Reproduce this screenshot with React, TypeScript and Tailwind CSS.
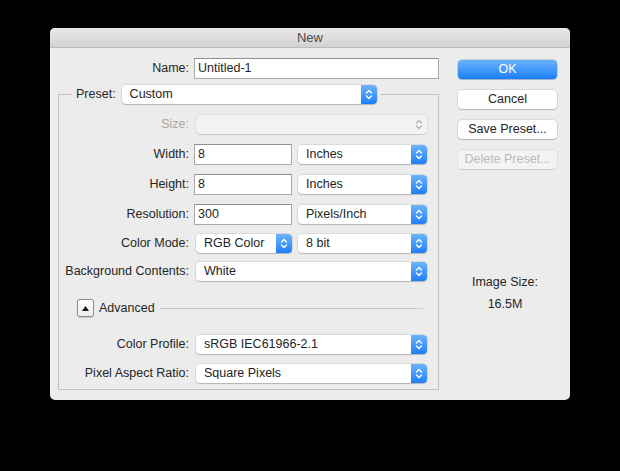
import React from "react";

const FONT = { fontFamily: '"Liberation Sans", Arial, Helvetica, sans-serif' };

function Chevrons({ color }: { color: string }) {
  return (
    <svg width="16" height="19" viewBox="0 0 16 19" fill="none">
      <path d="M5.5 8 L8 5.5 L10.5 8" stroke={color} strokeWidth="1.4" strokeLinecap="round" strokeLinejoin="round" />
      <path d="M5.5 11 L8 13.5 L10.5 11" stroke={color} strokeWidth="1.4" strokeLinecap="round" strokeLinejoin="round" />
    </svg>
  );
}

function Popup({ text, w, disabled }: { text: string; w: string; disabled?: boolean }) {
  return (
    <div
      className={`${w} h-[19px] rounded-[4px] flex items-center shrink-0 ${
        disabled
          ? "bg-[#f2f2f2] shadow-[0_0_0_0.5px_rgba(0,0,0,0.08),0_0.5px_1px_rgba(0,0,0,0.1)]"
          : "bg-white shadow-[0_0_0_0.5px_rgba(0,0,0,0.14),0_1px_1px_rgba(0,0,0,0.18)]"
      }`}
    >
      <span className="flex-1 pl-[8px] text-[12.5px] leading-none text-[#232323] truncate">{text}</span>
      {disabled ? (
        <div className="w-[16px] h-[19px] flex items-center justify-center">
          <Chevrons color="#b5b5b5" />
        </div>
      ) : (
        <div className="w-[16px] h-[19px] rounded-r-[4px] bg-gradient-to-b from-[#6cb3fa] to-[#1a7ff9] flex items-center justify-center">
          <Chevrons color="#ffffff" />
        </div>
      )}
    </div>
  );
}

function TextField({ value, w }: { value: string; w: string }) {
  return (
    <div className={`${w} h-[21px] bg-white border border-[#a9a9a9] border-t-[#8f8f8f] flex items-center pl-[3px] text-[12.5px] text-[#1f1f1f] shrink-0`}>
      {value}
    </div>
  );
}

function Label({ text, dim }: { text: string; dim?: boolean }) {
  return (
    <div className={`w-[130px] shrink-0 text-right text-[12.5px] whitespace-nowrap ${dim ? "text-[#a8a8a8]" : "text-[#262626]"}`}>
      {text}
    </div>
  );
}

function Button({ text, primary, disabled }: { text: string; primary?: boolean; disabled?: boolean }) {
  const cls = primary
    ? "bg-gradient-to-b from-[#6ab2fb] to-[#137ffa] text-white shadow-[0_0_0_0.5px_rgba(0,60,160,0.35),0_1px_1px_rgba(0,0,0,0.15)]"
    : disabled
    ? "bg-[#f3f3f3] text-[#b9b9b9] shadow-[0_0_0_0.5px_rgba(0,0,0,0.1),0_0.5px_1px_rgba(0,0,0,0.08)]"
    : "bg-white text-[#232323] shadow-[0_0_0_0.5px_rgba(0,0,0,0.16),0_1px_1px_rgba(0,0,0,0.18)]";
  return (
    <div className={`w-[99px] h-[19px] rounded-[4px] flex items-center justify-center text-[12.5px] ${cls}`}>{text}</div>
  );
}

export default function App() {
  return (
    <div className="w-[620px] h-[471px] bg-black pt-[28px] pl-[50px]" style={FONT}>
      <div className="w-[520px] h-[372px] rounded-[5px] overflow-hidden bg-[#ececec] flex flex-col">
        <div className="h-[20px] shrink-0 bg-gradient-to-b from-[#e8e8e8] to-[#d3d3d3] border-b border-[#bcbcbc] flex items-center justify-center text-[13px] text-[#4a4a4a]">
          New
        </div>
        <div className="flex flex-1">
          {/* left column */}
          <div className="w-[390px] shrink-0 pt-[10px]">
            <div className="flex items-center h-[21px] pl-[9px]">
              <Label text="Name:" />
              <div className="ml-[5px]">
                <TextField value="Untitled-1" w="w-[245px]" />
              </div>
            </div>
            <fieldset className="mt-[5px] ml-[8px] w-[381px] border border-[#c2c2c2] pb-[6px]">
              <legend className="ml-[13px] h-[20px] flex items-center pl-[4px] pr-[3px]">
                <span className="text-[12.5px] text-[#262626] mr-[6px]">Preset:</span>
                <Popup text="Custom" w="w-[255px]" />
              </legend>
              <div className="flex flex-col">
                <div className="flex items-center h-[20px] mt-[10px]">
                  <Label text="Size:" dim />
                  <div className="ml-[7px]">
                    <Popup text="" w="w-[231px]" disabled />
                  </div>
                </div>
                <div className="flex items-center h-[20px] mt-[10px]">
                  <Label text="Width:" />
                  <div className="ml-[5px]"><TextField value="8" w="w-[98px]" /></div>
                  <div className="ml-[6px]"><Popup text="Inches" w="w-[129px]" /></div>
                </div>
                <div className="flex items-center h-[20px] mt-[10px]">
                  <Label text="Height:" />
                  <div className="ml-[5px]"><TextField value="8" w="w-[98px]" /></div>
                  <div className="ml-[6px]"><Popup text="Inches" w="w-[129px]" /></div>
                </div>
                <div className="flex items-center h-[20px] mt-[10px]">
                  <Label text="Resolution:" />
                  <div className="ml-[5px]"><TextField value="300" w="w-[98px]" /></div>
                  <div className="ml-[6px]"><Popup text="Pixels/Inch" w="w-[129px]" /></div>
                </div>
                <div className="flex items-center h-[20px] mt-[9px]">
                  <Label text="Color Mode:" />
                  <div className="ml-[7px]"><Popup text="RGB Color" w="w-[96px]" /></div>
                  <div className="ml-[6px]"><Popup text="8 bit" w="w-[129px]" /></div>
                </div>
                <div className="flex items-center h-[20px] mt-[8px]">
                  <Label text="Background Contents:" />
                  <div className="ml-[7px]"><Popup text="White" w="w-[231px]" /></div>
                </div>
                <div className="flex items-center h-[20px] mt-[17px] pl-[18px] pr-[15px]">
                  <div className="w-[17px] h-[18px] rounded-[3px] border border-[#8e8e8e] bg-gradient-to-b from-white to-[#ededed] flex items-center justify-center shadow-[0_0.5px_1px_rgba(0,0,0,0.15)]">
                    <svg width="7" height="5" viewBox="0 0 7 5"><path d="M0 5 L3.5 0 L7 5 Z" fill="#1a1a1a" /></svg>
                  </div>
                  <span className="ml-[5px] text-[12.5px] text-[#262626]">Advanced</span>
                  <div className="flex-1 ml-[5px] h-px bg-[#c9c9c9]" />
                </div>
                <div className="flex items-center h-[20px] mt-[16px]">
                  <Label text="Color Profile:" />
                  <div className="ml-[7px]"><Popup text="sRGB IEC61966-2.1" w="w-[231px]" /></div>
                </div>
                <div className="flex items-center h-[20px] mt-[9px]">
                  <Label text="Pixel Aspect Ratio:" />
                  <div className="ml-[7px]"><Popup text="Square Pixels" w="w-[231px]" /></div>
                </div>
              </div>
            </fieldset>
          </div>
          {/* right column */}
          <div className="flex-1 flex flex-col pt-[12px]">
            <div className="pl-[18px] flex flex-col gap-[11px]">
              <Button text="OK" primary />
              <Button text="Cancel" />
              <Button text="Save Preset..." />
              <Button text="Delete Preset..." disabled />
            </div>
            <div className="mt-[105px] text-center text-[12.5px] text-[#262626] leading-[16px]">Image Size:</div>
            <div className="mt-[6px] text-center text-[12.5px] text-[#262626] leading-[16px]">16.5M</div>
          </div>
        </div>
      </div>
    </div>
  );
}
